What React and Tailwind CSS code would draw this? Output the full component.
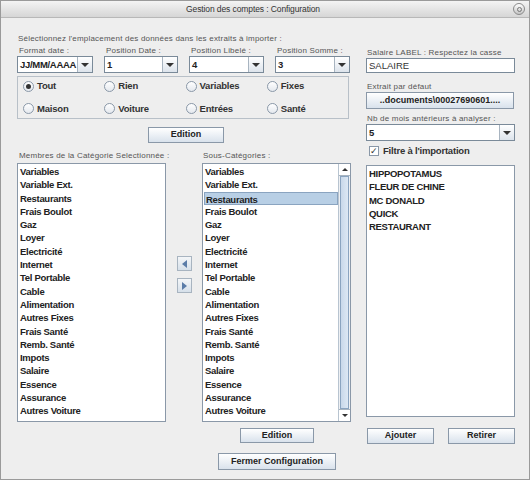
import React from 'react';

const membres = [
  'Variables', 'Variable Ext.', 'Restaurants', 'Frais Boulot', 'Gaz', 'Loyer',
  'Electricité', 'Internet', 'Tel Portable', 'Cable', 'Alimentation',
  'Autres Fixes', 'Frais Santé', 'Remb. Santé', 'Impots', 'Salaire',
  'Essence', 'Assurance', 'Autres Voiture',
];

const filtres = ['HIPPOPOTAMUS', 'FLEUR DE CHINE', 'MC DONALD', 'QUICK', 'RESTAURANT'];

const radios = [
  ['Tout', true], ['Rien'], ['Variables'], ['Fixes'],
  ['Maison'], ['Voiture'], ['Entrées'], ['Santé'],
];

function Label({ children, className = '' }) {
  return (
    <div className={`whitespace-nowrap text-[8px] leading-[10px] tracking-[0.2px] text-[#555] ${className}`}>
      {children}
    </div>
  );
}

function Button({ children, className = '' }) {
  return (
    <div
      className={`flex items-center justify-center whitespace-nowrap border border-[#8a98a8] bg-gradient-to-b from-white to-[#d9e2ec] text-[9px] font-bold text-[#222] ${className}`}
    >
      {children}
    </div>
  );
}

function Combo({ value, className = '' }) {
  return (
    <div className={`flex h-[17px] border border-[#7a8a99] bg-white ${className}`}>
      <div className="flex-1 pl-[2px] text-[9.5px] font-bold leading-[15px] tracking-[-0.3px] text-[#222]">{value}</div>
      <div className="flex w-[15px] items-center justify-center border-l border-[#a8b4c0] bg-gradient-to-b from-white to-[#dde4ec]">
        <div className="h-0 w-0 border-x-[4px] border-t-[4px] border-x-transparent border-t-[#333]" />
      </div>
    </div>
  );
}

function Radio({ label, checked }) {
  return (
    <div className="flex items-center gap-[3px]">
      <div className="flex h-[11px] w-[11px] items-center justify-center rounded-full border border-[#8a98a8] bg-gradient-to-b from-white to-[#e4e8ee]">
        {checked && <div className="h-[5px] w-[5px] rounded-full bg-[#333]" />}
      </div>
      <span className="text-[9.5px] font-bold tracking-[-0.2px] text-[#333]">{label}</span>
    </div>
  );
}

function List({ items, selected, scroll, className = '' }) {
  return (
    <div className={`flex border border-[#8a98a8] bg-white ${className}`}>
      <div className="flex-1 pt-[1px] pl-[1px]">
        {items.map((it) => (
          <div
            key={it}
            className={`h-[13.3px] pl-[1px] text-[9.5px] font-bold leading-[13px] tracking-[-0.3px] text-[#222] ${
              it === selected ? 'border border-[#8aa4c0] bg-[#b8cfe5]' : ''
            }`}
          >
            {it}
          </div>
        ))}
      </div>
      {scroll && (
        <div className="flex w-[12px] flex-col border-l border-[#b8c4d0] bg-[#eef0f3]">
          <div className="flex h-[12px] items-center justify-center border-b border-[#a8b4c0] bg-white">
            <div className="h-0 w-0 border-x-[3px] border-b-[3px] border-x-transparent border-b-[#333]" />
          </div>
          <div className="mx-px flex-1 border border-[#8aa4c0] bg-gradient-to-r from-[#c8d8ea] to-[#dde8f4]" />
          <div className="flex h-[12px] items-center justify-center border-t border-[#a8b4c0] bg-white">
            <div className="h-0 w-0 border-x-[3px] border-t-[3px] border-x-transparent border-t-[#333]" />
          </div>
        </div>
      )}
    </div>
  );
}

export default function App() {
  return (
    <div
      className="flex h-[480px] w-[530px] flex-col overflow-hidden border border-[#9a9a9a] bg-[#eeeeee]"
      style={{ fontFamily: '"Liberation Sans", Arial, sans-serif' }}
    >
      {/* Barre de titre */}
      <div className="relative flex h-[17px] items-center justify-center border-b border-[#b8b8b8] bg-gradient-to-b from-[#f4f4f4] to-[#d6d6d6] pr-[24px]">
        <span className="text-[8.5px] tracking-[-0.1px] text-[#333]">Gestion des comptes : Configuration</span>
        <div className="absolute right-[4px] top-[2px] flex h-[12px] w-[12px] items-center justify-center rounded-full border border-[#8a8a8a] bg-gradient-to-b from-white to-[#c4c4c4]">
          <div className="h-[5px] w-[5px] rounded-full border border-[#777]" />
        </div>
      </div>

      <div className="flex gap-[15px] pl-[16px] pt-[16px]">
        {/* Colonne gauche */}
        <div className="flex w-[334px] flex-col">
          <Label className="pl-[1px]">Sélectionnez l'emplacement des données dans les extraits à importer :</Label>
          <div className="mt-[2px] flex gap-[11px]">
            {[
              ['Format date :', 'JJ/MM/AAAA', 'w-[76px]'],
              ['Position Date :', '1', 'w-[74px]'],
              ['Position Libelé :', '4', 'w-[75px]'],
              ['Position Somme :', '3', 'w-[75px]'],
            ].map(([l, v, w]) => (
              <div key={l} className={w}>
                <Label className="pl-[2px]">{l}</Label>
                <Combo value={v} />
              </div>
            ))}
          </div>

          <div className="mt-[3px] grid h-[43px] w-[332px] grid-cols-4 content-center gap-y-[8px] border border-[#b8c0c8] pl-[5px]">
            {radios.map(([l, c]) => (
              <Radio key={l} label={l} checked={c} />
            ))}
          </div>

          <Button className="ml-[131px] mt-[8px] h-[16px] w-[76px]">Edition</Button>

          <div className="mt-[8px] flex">
            <Label className="w-[186px] pl-[2px]">Membres de la Catégorie Selectionnée :</Label>
            <Label>Sous-Catégories :</Label>
          </div>

          <div className="mt-[2px] flex h-[259px]">
            <List items={membres} className="w-[149px]" />
            <div className="flex w-[36px] flex-col items-center gap-[7px] pt-[93px]">
              <div className="flex h-[15px] w-[15px] items-center justify-center border border-[#a8b4c0] bg-gradient-to-b from-[#f4f6f8] to-[#d6e0ea]">
                <div className="h-0 w-0 border-y-[4px] border-r-[5px] border-y-transparent border-r-[#5a7ca8]" />
              </div>
              <div className="flex h-[15px] w-[15px] items-center justify-center border border-[#a8b4c0] bg-gradient-to-b from-[#f4f6f8] to-[#d6e0ea]">
                <div className="h-0 w-0 border-y-[4px] border-l-[5px] border-y-transparent border-l-[#5a7ca8]" />
              </div>
            </div>
            <List items={membres} selected="Restaurants" scroll className="w-[149px]" />
          </div>

          <Button className="ml-[223px] mt-[6px] h-[15px] w-[74px]">Edition</Button>
          <Button className="ml-[201px] mt-[10px] h-[17px] w-[118px]">Fermer Configuration</Button>
        </div>

        {/* Colonne droite */}
        <div className="flex w-[149px] flex-col pt-[14px]">
          <Label className="pl-[1px]">Salaire LABEL : Respectez la casse</Label>
          <div className="h-[15px] border border-[#7a8a99] bg-white pl-[2px] text-[9.5px] leading-[13px] text-[#333]">
            SALAIRE
          </div>
          <Label className="mt-[9px] pl-[1px]">Extrait par défaut</Label>
          <Button className="h-[17px] w-[148px]">..documents\00027690601....</Button>
          <Label className="mt-[5px] pl-[1px]">Nb de mois antérieurs à analyser :</Label>
          <Combo value="5" className="w-[149px]" />
          <div className="mt-[4px] flex h-[12px] items-center gap-[4px] pl-[3px]">
            <div className="flex h-[10px] w-[10px] items-center justify-center border border-[#8a98a8] bg-white text-[9px] leading-none text-[#333]">
              ✓
            </div>
            <span className="text-[9.5px] font-bold tracking-[-0.2px] text-[#333]">Filtre à l'importation</span>
          </div>
          <List items={filtres} className="mt-[8px] h-[252px] w-[149px]" />
          <div className="mt-[11px] flex justify-between pl-[1px]">
            <Button className="h-[16px] w-[67px]">Ajouter</Button>
            <Button className="h-[16px] w-[67px]">Retirer</Button>
          </div>
        </div>
      </div>
    </div>
  );
}
